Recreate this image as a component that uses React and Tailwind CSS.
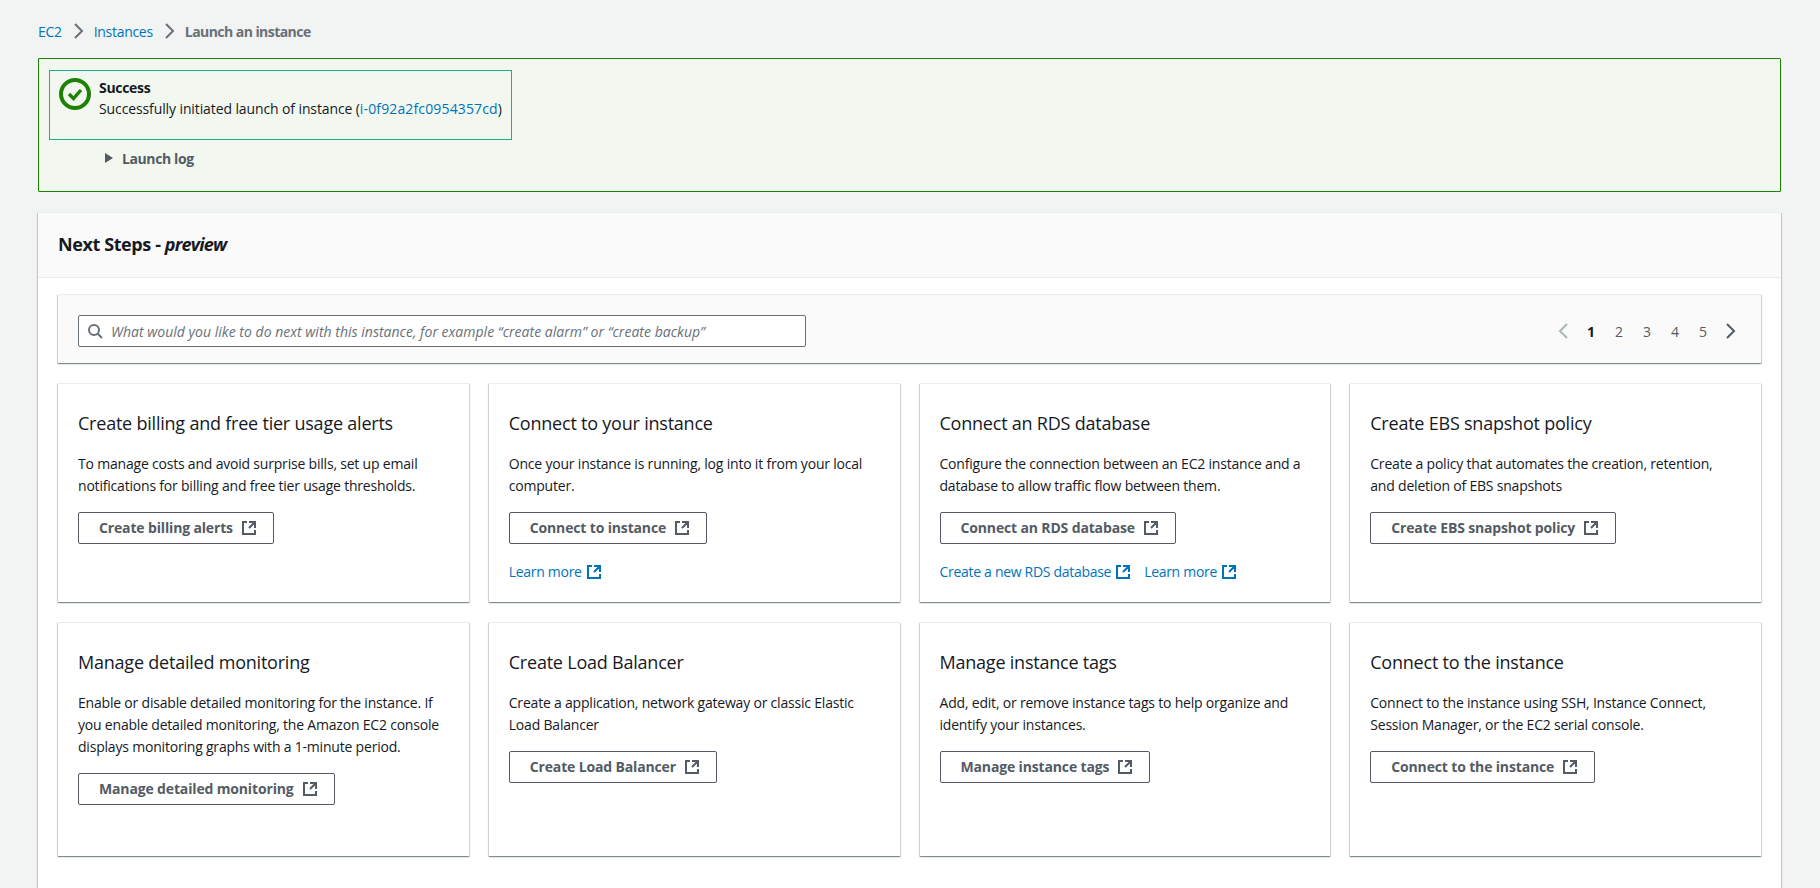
import React from "react";

const FONT = "font-['Open_Sans','Noto_Sans',sans-serif]";

function External({ className }) {
  return (
    <svg viewBox="0 0 16 16" className={className} fill="none" stroke="currentColor" strokeWidth="2">
      <path d="M14 8.01v-6H8M14.02 2 8 8.02M6 2.01H2V14h12v-3.99" />
    </svg>
  );
}

function Chevron({ dir = "right", className }) {
  return (
    <svg viewBox="0 0 16 16" className={className} fill="none" stroke="currentColor" strokeWidth="2">
      <path d={dir === "right" ? "m5 1 7 7-7 7" : "m11 1-7 7 7 7"} />
    </svg>
  );
}

function DocLink({ children }) {
  return (
    <a className="inline-flex items-center gap-[4px] text-[#0073bb] whitespace-nowrap">
      <span>{children}</span>
      <External className="w-[16px] h-[16px]" />
    </a>
  );
}

const cards = [
  { t: "Create billing and free tier usage alerts", d: ["To manage costs and avoid surprise bills, set up email", "notifications for billing and free tier usage thresholds."], b: "Create billing alerts" },
  { t: "Connect to your instance", d: ["Once your instance is running, log into it from your local", "computer."], b: "Connect to instance", l: ["Learn more"] },
  { t: "Connect an RDS database", d: ["Configure the connection between an EC2 instance and a", "database to allow traffic flow between them."], b: "Connect an RDS database", l: ["Create a new RDS database", "Learn more"] },
  { t: "Create EBS snapshot policy", d: ["Create a policy that automates the creation, retention,", "and deletion of EBS snapshots"], b: "Create EBS snapshot policy" },
  { t: "Manage detailed monitoring", d: ["Enable or disable detailed monitoring for the instance. If", "you enable detailed monitoring, the Amazon EC2 console", "displays monitoring graphs with a 1-minute period."], b: "Manage detailed monitoring" },
  { t: "Create Load Balancer", d: ["Create a application, network gateway or classic Elastic", "Load Balancer"], b: "Create Load Balancer" },
  { t: "Manage instance tags", d: ["Add, edit, or remove instance tags to help organize and", "identify your instances."], b: "Manage instance tags" },
  { t: "Connect to the instance", d: ["Connect to the instance using SSH, Instance Connect,", "Session Manager, or the EC2 serial console."], b: "Connect to the instance" },
];

const shadow = "shadow-[0_1px_1px_0_rgba(0,28,36,0.3),1px_1px_1px_0_rgba(0,28,36,0.15),-1px_1px_1px_0_rgba(0,28,36,0.15)]";

function Card({ t, d, b, l }) {
  return (
    <div className={`bg-white border-t border-[#eaeded] px-5 pt-[28px] pb-[19px] ${shadow}`}>
      <h3 className="text-[18px] leading-[22px] text-[#16191f] tracking-[-0.22px] whitespace-nowrap">{t}</h3>
      <p className="mt-[19px] text-[14px] leading-[22px] text-[#16191f] tracking-[-0.2px]">
        {d.map((x) => (
          <span key={x} className="block whitespace-nowrap">{x}</span>
        ))}
      </p>
      <button className="mt-[15px] inline-flex items-center gap-[8px] h-[32px] pl-5 pr-[16px] pb-[1px] border border-[#545b64] rounded-[2px] text-[14px] font-bold text-[#545b64] bg-white whitespace-nowrap tracking-[-0.15px]">
        <span>{b}</span>
        <External className="w-[16px] h-[16px] mt-[1px]" />
      </button>
      {l ? (
        <div className="mt-[17px] h-[22px] flex gap-[13px] text-[14px] leading-[22px] tracking-[-0.3px]">
          {l.map((x) => (
            <DocLink key={x}>{x}</DocLink>
          ))}
        </div>
      ) : (
        <div className="h-[32px]" />
      )}
    </div>
  );
}

export default function App() {
  return (
    <div className={`${FONT} bg-[#f2f3f3] h-[888px] overflow-hidden pl-[38px] pr-[39px] pt-[20px] text-[14px]`}>
      <nav className="h-[22px] flex items-center text-[14px] tracking-[-0.3px]">
        <a className="text-[#0073bb]">EC2</a>
        <Chevron className="w-[16px] h-[16px] mx-[8px] text-[#687078]" />
        <a className="text-[#0073bb]">Instances</a>
        <Chevron className="w-[16px] h-[16px] mx-[8px] text-[#687078]" />
        <span className="font-bold text-[#687078] tracking-[-0.55px]">Launch an instance</span>
      </nav>

      <section className="mt-[16px] h-[134px] border border-[#1d8102] bg-[#f2f8f0] rounded-[1px] pt-[11px] pl-[10px]">
        <div className="w-[463px] h-[70px] border border-[#16b09a] flex pl-[9px] pt-[6px] gap-[8px]">
          <svg viewBox="0 0 32 32" className="w-[32px] h-[32px] mt-[1px] shrink-0" fill="none" stroke="#1d8102">
            <circle cx="16" cy="16" r="14" strokeWidth="4" />
            <path d="m10 16 4.5 4.5L22 12" strokeWidth="3.4" />
          </svg>
          <div className="leading-[22px] tracking-[-0.11px] text-[#16191f]">
            <div className="font-bold tracking-[-0.3px]">Success</div>
            <div className="whitespace-nowrap -mt-[1px]">
              Successfully initiated launch of instance (<a className="text-[#0073bb] tracking-[0.14px]">i-0f92a2fc0954357cd</a>)
            </div>
          </div>
        </div>
        <div className="mt-[7px] ml-[56px] h-[22px] flex items-center gap-[9px] font-bold text-[#545b64] tracking-[-0.4px]">
          <svg viewBox="0 0 8 10" className="w-[8px] h-[10px]" fill="currentColor">
            <path d="M0 0v10l8-5z" />
          </svg>
          <span>Launch log</span>
        </div>
      </section>

      <section className={`mt-[20px] bg-white border-t border-[#eaeded] ${shadow} pb-[40px]`}>
        <header className="h-[65px] bg-[#fafafa] border-b border-[#eaeded] flex items-center px-5 pb-[2px]">
          <h2 className="text-[18px] font-bold text-[#16191f] tracking-[-0.4px]">
            Next Steps - <em className="tracking-[-0.8px]">preview</em>
          </h2>
        </header>
        <div className="px-5 pt-[16px]">
          <div className={`h-[69px] bg-[#fafafa] border-t border-[#eaeded] ${shadow} flex items-center justify-between pl-5 pr-[23px] pt-[4px]`}>
            <label className="w-[728px] h-[32px] bg-white border border-[#687078] rounded-[2px] flex items-center pl-[8px] gap-[8px]">
              <svg viewBox="0 0 16 16" className="w-[16px] h-[16px] shrink-0 text-[#687078]" fill="none" stroke="currentColor" strokeWidth="2">
                <circle cx="7" cy="7" r="5" />
                <path d="m15 15-4.5-4.5" />
              </svg>
              <span className="italic text-[#687078] tracking-[0.02px] whitespace-nowrap">
                What would you like to do next with this instance, for example “create alarm” or “create backup”
              </span>
            </label>
            <div className="flex items-center text-[14px] text-[#545b64]">
              <Chevron dir="left" className="w-[16px] h-[16px] mr-[5px] text-[#aab7b8]" />
              <span className="w-[28px] text-center font-bold text-[#16191f]">1</span>
              <span className="w-[28px] text-center">2</span>
              <span className="w-[28px] text-center">3</span>
              <span className="w-[28px] text-center">4</span>
              <span className="w-[28px] text-center">5</span>
              <Chevron className="w-[16px] h-[16px] ml-[5px] text-[#545b64]" />
            </div>
          </div>
          <div className="mt-[20px] grid grid-cols-4 gap-x-5 gap-y-[20px]">
            {cards.map((c) => (
              <Card key={c.t} {...c} />
            ))}
          </div>
        </div>
      </section>
    </div>
  );
}
